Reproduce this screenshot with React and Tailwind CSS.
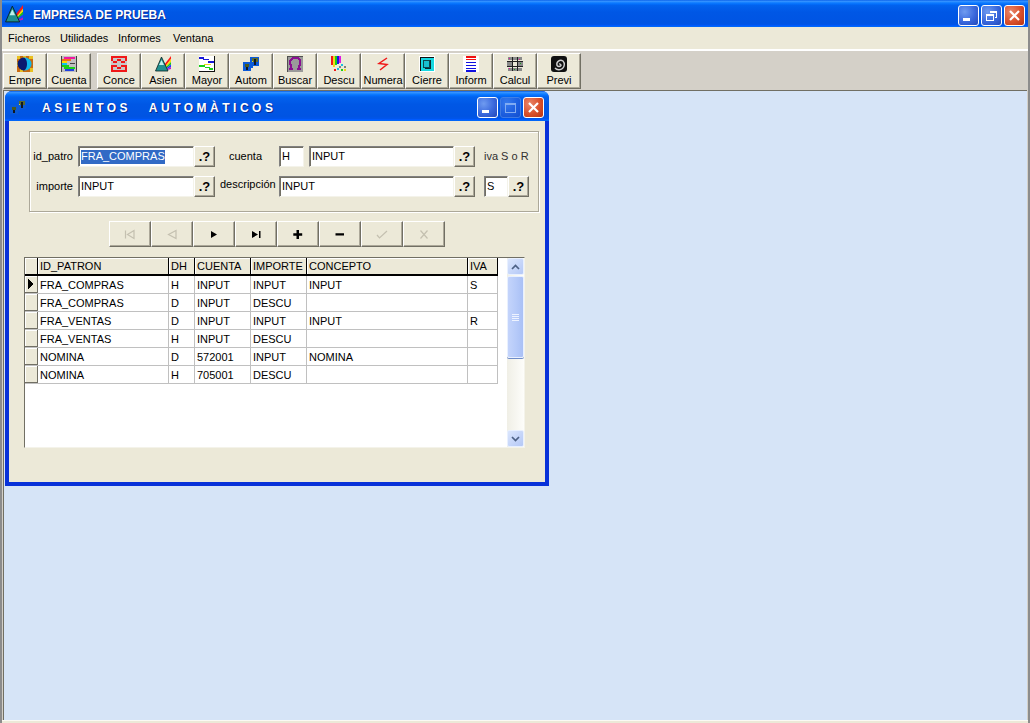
const titleBg = 'bg-[linear-gradient(180deg,#0058e6_0%,#3a93ff_4%,#288eff_7%,#127dff_10%,#036ffc_15%,#0262ee_20%,#0057e5_45%,#0054e3_85%,#0055eb_92%,#005bff_95%,#026afe_97%,#0062ef_100%)]';

// little toolbar drawings
function Prism({ size = 16 }) {
  return (
    <svg width={size} height={size} viewBox="0 0 16 16">
      <path d="M9 9 L16 0 L16 3 L10.500 10 Z" fill="#ff1818" />
      <path d="M10.500 10 L16 3 L16 6 L11 11 Z" fill="#ffd800" />
      <path d="M11 11 L16 6 L16 8.500 L11.500 12 Z" fill="#18c818" />
      <path d="M11.500 12 L16 8.500 L16 11 L12 13 Z" fill="#2040ff" />
      <path d="M12 13 L16 11 L16 13 L12.500 14 Z" fill="#c018c0" />
      <path d="M6.500 1 L13 15 L0.500 15 Z" fill="#1f9090" stroke="#082020" strokeWidth="0.8" />
      <path d="M6.500 4 L9 9 L4 9 Z" fill="#bff0ea" />
    </svg>
  );
}

function Autom({ size = 16 }) {
  return (
    <svg width={size} height={size} viewBox="0 0 16 16" shapeRendering="crispEdges">
      <rect x="0" y="6" width="8" height="9" fill="#0a5ad8" />
      <rect x="2" y="8" width="4" height="3" fill="#4a5a20" />
      <rect x="3" y="11" width="2" height="3" fill="#101820" />
      <rect x="7" y="9" width="3" height="3" fill="#0a5ad8" />
      <rect x="7" y="1" width="9" height="9" fill="#0a5ad8" />
      <rect x="9" y="2" width="6" height="4" fill="#5a6a30" />
      <rect x="11" y="3" width="2" height="6" fill="#101820" />
      <rect x="9" y="5" width="1" height="1" fill="#d0e040" />
    </svg>
  );
}

const icons = {
  Empre: (
    <svg width="16" height="16" viewBox="0 0 16 16" shapeRendering="crispEdges">
      <rect width="16" height="16" fill="#c86a10" />
      <path d="M0 0h3v3H0zM6 0h3v2H6zM12 0h4v3h-4zM0 6h2v4H0zM13 12h3v4h-3zM3 13h3v3H3z" fill="#e8c020" />
      <circle cx="8" cy="8" r="6.500" fill="#10b8e8" shapeRendering="auto" />
      <path d="M7 1.500a6.500 6.500 0 0 0 0 13 5 7 0 0 0 3-6.500 5 7 0 0 0-3-6.500z" fill="#0a1a70" shapeRendering="auto" />
    </svg>
  ),
  Cuenta: (
    <svg width="16" height="16" viewBox="0 0 16 16" shapeRendering="crispEdges">
      <rect width="16" height="16" fill="#c0c0c0" />
      <path d="M3 1h11v2H3z" fill="#f018a0" />
      <path d="M1 3h9v2H1z" fill="#f07018" />
      <path d="M0 5h6v2H0z" fill="#ffd800" />
      <path d="M0 7h6v2H0z" fill="#18c0f0" />
      <path d="M1 9h7v2H1z" fill="#18d018" />
      <path d="M3 11h11v2H3z" fill="#18d018" />
      <path d="M4 13h9v2H4z" fill="#2040e0" />
      <path d="M9 7h5v1H9zM0 0h1v16H0zM15 0h1v16h-1z" fill="#404040" />
    </svg>
  ),
  Conce: (
    <svg width="16" height="16" viewBox="0 0 16 16" shapeRendering="crispEdges">
      <rect width="16" height="16" fill="#c8c8c8" />
      <path d="M0 0h16v2H0zM0 2h2v3H0zM14 2h2v3h-2zM2 5h4v2H2zM10 5h4v2h-4zM6 3h4v2H6zM0 9h6v2H0zM10 9h6v2h-6zM6 11h4v2H6zM0 11h2v3H0zM14 11h2v3h-2zM0 14h16v2H0z" fill="#f01818" />
    </svg>
  ),
  Asien: <Prism />,
  Mayor: (
    <svg width="16" height="16" viewBox="0 0 16 16" shapeRendering="crispEdges">
      <rect width="16" height="16" fill="#ffffff" />
      <path d="M0 1h5v2H0zM4 3h6v1H4zM9 5h6v2H9z" fill="#1818d8" />
      <path d="M5 8h7v1H5z" fill="#e8e018" />
      <path d="M0 9h6v2H0zM6 11h5v1H6zM10 12h4v2h-4z" fill="#18d018" />
      <path d="M15 0h1v16h-1zM0 15h16v1H0z" fill="#101010" />
    </svg>
  ),
  Autom: <Autom />,
  Buscar: (
    <svg width="16" height="16" viewBox="0 0 16 16" shapeRendering="crispEdges">
      <rect width="16" height="16" fill="#9a9a9a" />
      <path d="M0 0h16v1H0zM0 0h1v16H0z" fill="#505050" />
      <path d="M2 14h4v-2H5V9L4 8V5l2-2h4l2 2v3l-1 1v3h-1v2h4v-2h-1v-1l1-2V4l-3-3H5L2 4v4l1 2v2H2z" fill="#8a1090" />
    </svg>
  ),
  Descu: (
    <svg width="16" height="16" viewBox="0 0 16 16" shapeRendering="crispEdges">
      <path d="M0 0h2v9H0z" fill="#f01818" />
      <path d="M2 0h2v11H2z" fill="#f0d818" />
      <path d="M4 0h2v9H4z" fill="#18d018" />
      <path d="M6 0h2v8H6z" fill="#1818e0" />
      <path d="M8 0h2v7H8z" fill="#e018e0" />
      <path d="M10 8h2v2h-2zM6 12h2v2H6z" fill="#18c0e0" />
      <path d="M13 10h2v2h-2zM8 10h2v2H8z" fill="#808080" />
      <path d="M3 13h2v2H3z" fill="#f01818" />
      <path d="M10 13h2v2h-2z" fill="#18d018" />
      <path d="M13 13h2v2h-2z" fill="#f0d818" />
    </svg>
  ),
  Numera: (
    <svg width="16" height="16" viewBox="0 0 16 16">
      <path d="M12 2 L4 7.500 L12 8.500 L5 14" fill="none" stroke="#f01818" strokeWidth="1.500" />
    </svg>
  ),
  Cierre: (
    <svg width="16" height="16" viewBox="0 0 16 16" shapeRendering="crispEdges">
      <rect width="16" height="16" fill="#ffffff" />
      <rect x="1" y="1" width="14" height="14" fill="#18d8e0" />
      <path d="M1 1h14v1H1zM1 1h1v14H1z" fill="#101010" />
      <path d="M4 4h6v7H4z" fill="#18c0d0" stroke="#0a4850" />
      <path d="M11 4h1v9H6v-1h5z" fill="#0a2830" />
    </svg>
  ),
  Inform: (
    <svg width="16" height="16" viewBox="0 0 16 16" shapeRendering="crispEdges">
      <rect width="16" height="16" fill="#ffffff" />
      <path d="M3 0h10v2H3zM3 3h10v1H3z" fill="#f01010" />
      <path d="M3 6h10v1H3zM3 9h10v1H3zM3 12h10v1H3zM3 14h10v2H3z" fill="#1010e0" />
    </svg>
  ),
  Calcul: (
    <svg width="16" height="16" viewBox="0 0 16 16" shapeRendering="crispEdges">
      <path d="M1 1h4v3H1zM6 1h4v3H6zM11 1h4v3h-4zM0 6h5v4H0zM11 6h5v4h-5zM1 12h4v3H1zM6 12h4v3H6zM11 12h4v3h-4z" fill="#8a8a8a" />
      <path d="M0 5h16v1H0zM0 10h16v1H0zM5 1h1v14H5zM10 1h1v14h-1z" fill="#202020" />
      <path d="M2 2h1v1H2zM12 3h1v1h-1zM2 12h1v1H2z" fill="#e018a0" />
      <path d="M7 13h1v1H7zM13 7h1v1h-1z" fill="#18a018" />
    </svg>
  ),
  Previ: (
    <svg width="16" height="16" viewBox="0 0 16 16">
      <rect width="16" height="16" fill="#101010" rx="3" />
      <path d="M8 8a1.500 1.500 0 0 1 2 1.500 2.600 2.600 0 0 1-4 0A4 4 0 0 1 12 5 5 5 0 0 1 4 12" fill="none" stroke="#d0d0d0" strokeWidth="1.400" />
    </svg>
  ),
};

const toolGroups = [['Empre', 'Cuenta'], ['Conce', 'Asien', 'Mayor', 'Autom', 'Buscar', 'Descu', 'Numera', 'Cierre', 'Inform', 'Calcul', 'Previ']];

const menus = [
  { label: 'Ficheros', w: 'w-[52px]' },
  { label: 'Utilidades', w: 'w-[58px]' },
  { label: 'Informes', w: 'w-[55px]' },
  { label: 'Ventana', w: 'w-[50px]' },
];

const rows = [
  ['FRA_COMPRAS', 'H', 'INPUT', 'INPUT', 'INPUT', 'S'],
  ['FRA_COMPRAS', 'D', 'INPUT', 'DESCU', '', ''],
  ['FRA_VENTAS', 'D', 'INPUT', 'INPUT', 'INPUT', 'R'],
  ['FRA_VENTAS', 'H', 'INPUT', 'DESCU', '', ''],
  ['NOMINA', 'D', '572001', 'INPUT', 'NOMINA', ''],
  ['NOMINA', 'H', '705001', 'DESCU', '', ''],
];

const cols = [
  { label: 'ID_PATRON', w: 'w-[131px]' },
  { label: 'DH', w: 'w-[26px]' },
  { label: 'CUENTA', w: 'w-[56px]' },
  { label: 'IMPORTE', w: 'w-[56px]' },
  { label: 'CONCEPTO', w: 'w-[161px]' },
  { label: 'IVA', w: 'w-[30px]' },
];

function XpButton({ kind, dim }) {
  const bg = kind === 'close'
    ? 'bg-[radial-gradient(circle_at_30%_30%,#e9876a,#d9502c_55%,#b63412)]'
    : 'bg-[radial-gradient(circle_at_30%_30%,#6f9bf0,#3a68dc_55%,#2448b8)]';
  return (
    <div className={`w-[21px] h-[21px] ${bg} ${dim ? 'border-[#7f9fe0] opacity-50' : 'border-white'} border rounded-[3px] flex items-center justify-center shrink-0`}>
      <svg width="15" height="15" viewBox="0 0 15 15" shapeRendering="crispEdges" fill="none" stroke="white">
        {kind === 'min' && <rect x="2" y="10" width="7" height="3" fill="white" stroke="none" />}
        {kind === 'max' && <path d="M2.500 3.500h10v9h-10zM2.500 4.500h10" />}
        {kind === 'restore' && <path d="M5.500 3.500h7v6h-2M5.500 4.500h7M2.500 6.500h7v6h-7zM2.500 7.500h7" />}
        {kind === 'close' && <path d="M3 3l9 9M12 3l-9 9" strokeWidth="2.200" shapeRendering="auto" />}
      </svg>
    </div>
  );
}

function Raised({ className = '', children }) {
  return (
    <div className={`bg-[#ece9d8] border border-t-white border-l-white border-r-[#716f64] border-b-[#716f64] shadow-[inset_-1px_-1px_0_#aca899] flex items-center justify-center ${className}`}>
      {children}
    </div>
  );
}

function Field({ value, w, selected }) {
  return (
    <div className={`${w} h-[21px] bg-white border border-t-[#808080] border-l-[#808080] border-r-[#f4f3ea] border-b-[#f4f3ea] shadow-[inset_1px_1px_0_#716f64] pl-[2px] flex items-center text-[11px] leading-none text-black shrink-0`}>
      {selected ? <span className="bg-[#316ac5] text-white h-[14px] flex items-center">{value}</span> : value}
    </div>
  );
}

function Help() {
  return (
    <Raised className="w-[21px] h-[21px] shrink-0">
      <span className="font-bold text-[13px] leading-none text-black">.?</span>
    </Raised>
  );
}

const navIcons = [
  { d: 'M2.500 2.500v8M11 2.500L4.500 6.500 11 10.500z', off: true },
  { d: 'M11 2.500L3.500 6.500 11 10.500z', off: true },
  { d: 'M4 3l6 3.500L4 10z' },
  { d: 'M3 3l6 3.500L3 10zM10 3h1.500v7H10z' },
  { d: 'M5.500 2h2.500v3.200h3.200v2.500H8v3.300H5.500V7.700H2.300V5.200h3.200z' },
  { d: 'M2.500 5.200h8.500v2.400H2.500z' },
  { d: 'M2 7l2.500 3L12 3', off: true },
  { d: 'M3.500 2.500l7 8M10.500 2.500l-7 8', off: true },
];

function ScrollBtn({ up }) {
  return (
    <div className="h-[17px] border border-[#e8f0ff] rounded-[2px] bg-[linear-gradient(135deg,#dbe6fd,#b4c8f6)] flex items-center justify-center">
      <svg width="9" height="6" viewBox="0 0 9 6" fill="none" stroke="#4d6185" strokeWidth="1.700">
        <path d={up ? 'M1 5l3.500-3.500L8 5' : 'M1 1l3.500 3.500L8 1'} />
      </svg>
    </div>
  );
}

function Grid() {
  return (
    <div className="h-[191px] w-[501px] border border-t-[#716f64] border-l-[#716f64] border-r-[#f4f3ea] border-b-[#f4f3ea] bg-white flex text-[11px] leading-none text-black">
      <div className="w-[482px] shrink-0">
        <div className="w-[473px]">
          <div className="flex h-[18px] border-b-2 border-black">
            <div className="w-[13px] bg-[#ece9d8] border-r border-black shadow-[inset_1px_1px_0_#fff]" />
            {cols.map((c) => (
              <div key={c.label} className={`${c.w} bg-[#ece9d8] border-r border-black pl-[2px] pt-[1px] flex items-center shadow-[inset_1px_1px_0_#fff]`}>{c.label}</div>
            ))}
          </div>
          {rows.map((row, i) => (
            <div key={i} className="flex h-[18px] border-b border-[#c0c0c0]">
              <div className="w-[13px] bg-[#ece9d8] border-r border-b border-[#716f64] shadow-[inset_1px_1px_0_#fff] flex items-center justify-center">
                {i === 0 && <svg width="6" height="10" viewBox="0 0 6 10" shapeRendering="crispEdges"><path d="M0 0l6 5-6 5z" fill="black" /></svg>}
              </div>
              {cols.map((c, j) => (
                <div key={j} className={`${c.w} border-r border-[#c0c0c0] pl-[2px] pt-[1px] flex items-center`}>{row[j]}</div>
              ))}
            </div>
          ))}
        </div>
      </div>
      <div className="w-[17px] bg-[linear-gradient(90deg,#f0efe6,#fdfdfa)] flex flex-col justify-between">
        <div>
          <ScrollBtn up />
          <div className="h-[82px] mt-[1px] border border-[#e8f0ff] rounded-[2px] bg-[linear-gradient(90deg,#c4d4fb,#b7cbf9_50%,#a9c0f5)] shadow-[0_1px_0_#6f8cc8] flex flex-col items-center justify-center gap-[1px]">
            {[0, 1, 2, 3].map((k) => <div key={k} className="w-[7px] h-[1px] bg-[#eef3ff]" />)}
          </div>
        </div>
        <ScrollBtn />
      </div>
    </div>
  );
}

function ChildWindow() {
  return (
    <div className="absolute left-[1px] top-0 w-[544px] h-[395px] rounded-t-[7px] overflow-hidden bg-[#0831d9] flex flex-col">
      <div className={`h-[30px] pl-[5px] pr-[5px] pt-[2px] flex items-center shrink-0 ${titleBg}`}>
        <Autom size={16} />
        <span className="ml-[16px] mt-[2px] font-bold text-[12px] tracking-[3.500px] [word-spacing:2px] text-white [text-shadow:1px_1px_0_#0a2a90]">ASIENTOS&nbsp;&nbsp;AUTOMÀTICOS</span>
        <div className="ml-auto flex gap-[2px]">
          <XpButton kind="min" />
          <XpButton kind="max" dim />
          <XpButton kind="close" />
        </div>
      </div>
      <div className="mx-[4px] mb-[4px] flex-1 bg-[#ece9d8] pt-[10px] pl-[20px]">
        <div className="w-[510px] h-[81px] border border-[#aca899] shadow-[inset_1px_1px_0_#fff,1px_1px_0_#fff] text-[11px] leading-none text-black pl-[43px] pt-[14px] flex flex-col gap-[9px]">
          <div className="flex items-center">
            <span className="w-0 flex justify-end whitespace-nowrap pr-[5px]">id_patro</span>
            <Field value="FRA_COMPRAS" w="w-[116px]" selected />
            <Help />
            <span className="ml-[14px] w-[50px]">cuenta</span>
            <Field value="H" w="w-[25px]" />
            <span className="w-[5px]" />
            <Field value="INPUT" w="w-[145px]" />
            <Help />
            <span className="ml-[9px] whitespace-nowrap text-[#303030]">iva S o R</span>
          </div>
          <div className="flex items-center">
            <span className="w-0 flex justify-end whitespace-nowrap pr-[5px]">importe</span>
            <Field value="INPUT" w="w-[116px]" />
            <Help />
            <span className="ml-[5px] w-[59px] -mt-[4px] whitespace-nowrap">descripción</span>
            <Field value="INPUT" w="w-[175px]" />
            <Help />
            <span className="w-[9px]" />
            <Field value="S" w="w-[24px]" />
            <Help />
          </div>
        </div>
        <div className="ml-[80px] mt-[9px] flex">
          {navIcons.map((n, i) => (
            <Raised key={i} className="w-[42px] h-[26px]">
              <svg width="14" height="13" viewBox="0 0 14 13">
                <path d={n.d} fill={n.off ? 'none' : 'black'} stroke={n.off ? '#c4c0b0' : 'none'} strokeWidth="1.200" />
              </svg>
            </Raised>
          ))}
        </div>
        <div className="mt-[10px] -ml-[5px]">
          <Grid />
        </div>
      </div>
    </div>
  );
}

export default function App() {
  return (
    <div className="w-[1030px] h-[723px] overflow-hidden flex flex-col font-['Liberation_Sans',Arial,sans-serif] bg-[#d4d0c8] border-x-2 border-[#8c8c8c]">
      {/* main title bar */}
      <div className={`h-[27px] pl-[3px] pr-[3px] flex items-center shrink-0 ${titleBg}`}>
        <Prism size={18} />
        <span className="ml-[10px] mt-[2px] font-bold text-[12px] text-white [text-shadow:1px_1px_0_#0a2a90]">EMPRESA DE PRUEBA</span>
        <div className="ml-auto pt-[3px] flex gap-[2px]">
          <XpButton kind="min" />
          <XpButton kind="restore" />
          <XpButton kind="close" />
        </div>
      </div>
      {/* menu */}
      <div className="h-[22px] bg-[#ece9d8] flex items-center pl-[6px] text-[11px] leading-none text-black shrink-0">
        {menus.map((m) => <span key={m.label} className={m.w}>{m.label}</span>)}
      </div>
      <div className="h-[2px] bg-white shrink-0" />
      {/* toolbar */}
      <div className="h-[39px] pl-[1px] pt-[2px] flex items-start gap-[6px] shrink-0 text-[11px] leading-none text-black">
        {toolGroups.map((group, i) => (
          <div key={i} className="flex">
            {group.map((name) => (
              <Raised key={name} className="w-[44px] h-[36px] !flex-col !justify-start pt-[2px] gap-[3px]">
                {icons[name]}
                <span>{name}</span>
              </Raised>
            ))}
          </div>
        ))}
      </div>
      {/* mdi area */}
      <div className="flex-1 ml-[1px] mr-[1px] border-l border-t border-[#716f64] relative bg-[#d6e4f7]">
        <ChildWindow />
      </div>
      <div className="h-[3px] shrink-0 bg-[#ece9d8] border-t border-[#fbfaf4]" />
    </div>
  );
}
